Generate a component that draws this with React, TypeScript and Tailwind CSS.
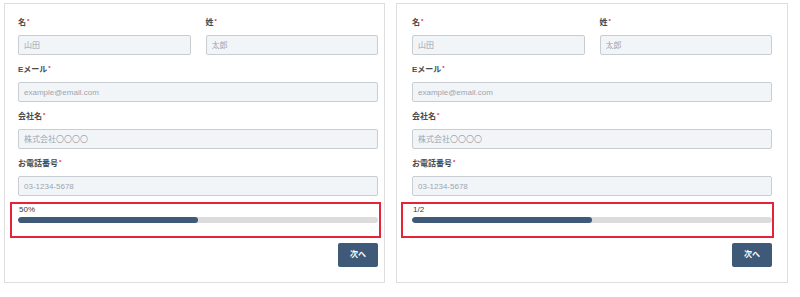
import React from "react";

const font = { fontFamily: '"Liberation Sans", "Noto Sans CJK JP", sans-serif' };

function Label({ text }: { text: string }) {
  return (
    <div className="h-[12px] leading-[12px] text-[8px] font-semibold text-[#4a4a4a] mb-[6px] flex items-center">
      <span>{text}</span>
      <span className="text-[#e3243b] text-[6px] leading-none relative -top-[2px] ml-[1px]">*</span>
    </div>
  );
}

function Field({ label, placeholder }: { label: string; placeholder: string }) {
  return (
    <div className="flex flex-col">
      <Label text={label} />
      <input
        readOnly
        placeholder={placeholder}
        style={font}
        className="h-[20px] w-full rounded-[2px] border border-[#c8cdd3] bg-[#f2f5f8] px-[5px] text-[8px] text-[#333] placeholder:text-[#9ca5b0] outline-none"
      />
    </div>
  );
}

function Card({
  progressLabel,
  cardClass,
  contentClass,
  boxClass,
}: {
  progressLabel: string;
  cardClass: string;
  contentClass: string;
  boxClass: string;
}) {
  return (
    <div className={`border border-[#dedede] bg-white ${cardClass}`}>
      <div className={`flex flex-col ${contentClass}`}>
        <div className="flex flex-col gap-[9px]">
          <div className="grid grid-cols-2 gap-[15px]">
            <Field label="名" placeholder="山田" />
            <Field label="姓" placeholder="太郎" />
          </div>
          <Field label="Eメール" placeholder="example@email.com" />
          <Field label="会社名" placeholder="株式会社〇〇〇〇" />
          <Field label="お電話番号" placeholder="03-1234-5678" />
        </div>
        <div className={`mt-[6px] border-2 border-[#e3243b] pt-0 pb-[13px] ${boxClass}`}>
          <div className="h-[12px] leading-[12px] text-[8px] text-[#3a3a3a] pl-[1px]">{progressLabel}</div>
          <div className="mt-[1px] h-[6px] w-full rounded-full bg-[#dcdcdc] overflow-hidden">
            <div className="h-full w-1/2 rounded-full bg-[#3e5a78]" />
          </div>
        </div>
        <div className="mt-[5px] flex justify-end">
          <button
            style={font}
            className="h-[24px] w-[40px] rounded-[2px] bg-[#3e5a78] text-[8px] font-bold text-white"
          >
            次へ
          </button>
        </div>
      </div>
    </div>
  );
}

export default function App() {
  return (
    <div style={font} className="w-[800px] h-[297px] bg-white flex items-start pl-[4px] pt-[3px]">
      <Card
        progressLabel="50%"
        cardClass="w-[381px] pl-[13px] pr-[6px] pt-[13px] pb-[15px]"
        contentClass="w-[360px]"
        boxClass="-ml-[8px] -mr-[3px] pl-[6px] pr-[1px]"
      />
      <Card
        progressLabel="1/2"
        cardClass="ml-[11px] w-[392px] pl-[15px] pr-[15px] pt-[13px] pb-[15px]"
        contentClass="w-[360px]"
        boxClass="-ml-[11px] -mr-[2px] pl-[9px] pr-[0px]"
      />
    </div>
  );
}
